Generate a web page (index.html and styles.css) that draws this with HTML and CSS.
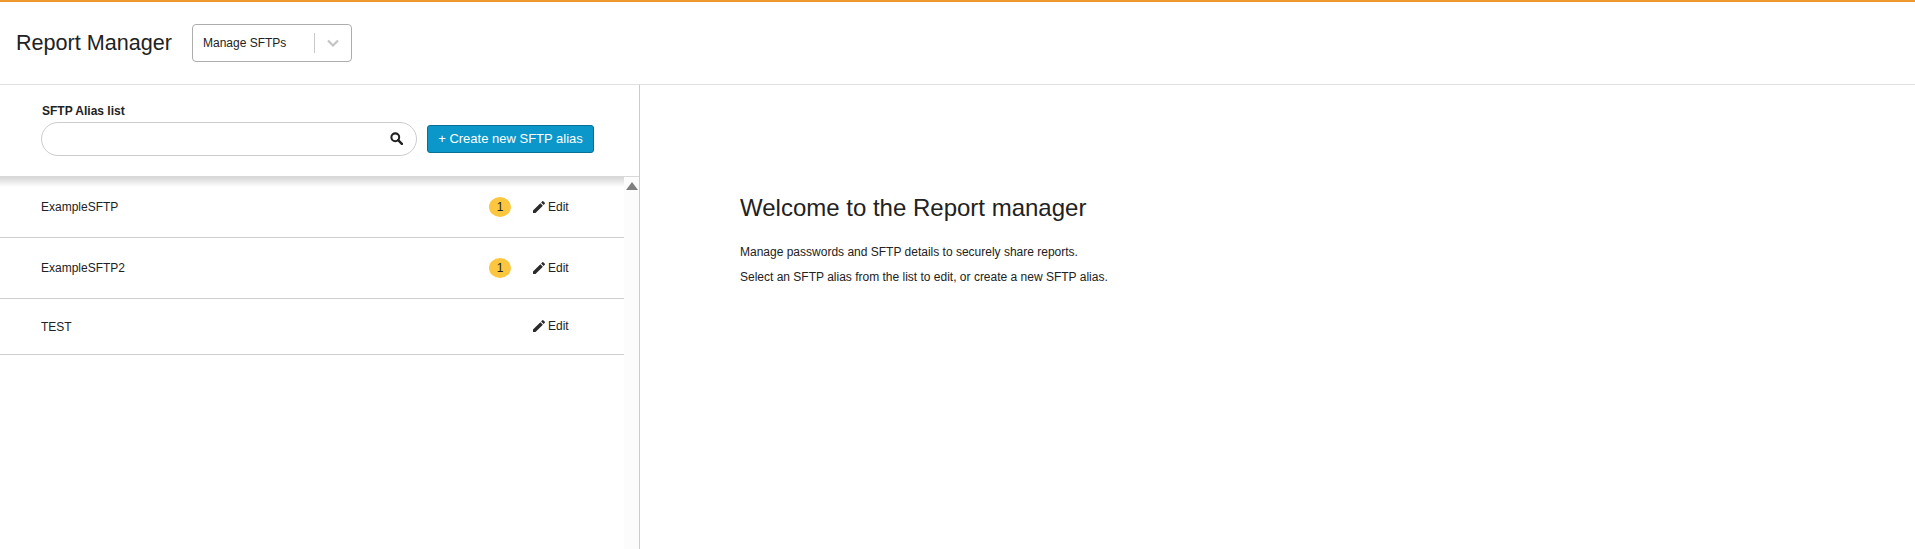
FILE: index.html
```html
<!DOCTYPE html>
<html lang="en">
<head>
<meta charset="utf-8">
<title>Report Manager</title>
<link rel="stylesheet" href="styles.css">
</head>
<body>
<div class="app">
  <header class="topbar">
    <h1 class="app-title">Report Manager</h1>
    <div class="select">
      <span class="select-value">Manage SFTPs</span>
      <span class="select-sep"></span>
      <svg class="select-chevron" viewBox="0 0 12 8" width="12" height="8"><path d="M1 1.5l5 5 5-5" fill="none" stroke="#c4c4c4" stroke-width="2.2"/></svg>
    </div>
  </header>
  <main class="body">
    <aside class="side">
      <section class="search-panel">
        <div class="search-col">
          <label class="search-label">SFTP Alias list</label>
          <div class="search-box">
            <svg class="search-icon" viewBox="0 0 14 14" width="13" height="13"><circle cx="5.7" cy="5.7" r="4.2" fill="none" stroke="#222" stroke-width="2.2"/><path d="M8.8 8.8l4 4" stroke="#222" stroke-width="2.6" stroke-linecap="round"/></svg>
          </div>
        </div>
        <button class="create-btn">+ Create new SFTP alias</button>
      </section>
      <div class="list-wrap">
        <ul class="list">
          <li class="row row-a"><span class="row-name">ExampleSFTP</span><span class="badge">1</span><span class="edit"><svg viewBox="0 0 24 24" width="16" height="16"><path d="M3 17.25V21h3.75L17.81 9.94l-3.75-3.75L3 17.25zM20.71 7.04a1 1 0 0 0 0-1.41l-2.34-2.34a1 1 0 0 0-1.41 0l-1.83 1.83 3.75 3.75 1.83-1.83z" fill="#2b2b2b"/></svg>Edit</span></li>
          <li class="row row-a"><span class="row-name">ExampleSFTP2</span><span class="badge">1</span><span class="edit"><svg viewBox="0 0 24 24" width="16" height="16"><path d="M3 17.25V21h3.75L17.81 9.94l-3.75-3.75L3 17.25zM20.71 7.04a1 1 0 0 0 0-1.41l-2.34-2.34a1 1 0 0 0-1.41 0l-1.83 1.83 3.75 3.75 1.83-1.83z" fill="#2b2b2b"/></svg>Edit</span></li>
          <li class="row row-b"><span class="row-name">TEST</span><span class="edit"><svg viewBox="0 0 24 24" width="16" height="16"><path d="M3 17.25V21h3.75L17.81 9.94l-3.75-3.75L3 17.25zM20.71 7.04a1 1 0 0 0 0-1.41l-2.34-2.34a1 1 0 0 0-1.41 0l-1.83 1.83 3.75 3.75 1.83-1.83z" fill="#2b2b2b"/></svg>Edit</span></li>
        </ul>
        <div class="scrollbar"><span class="scroll-up"></span></div>
      </div>
    </aside>
    <section class="content">
      <h2 class="welcome">Welcome to the Report manager</h2>
      <p class="para">Manage passwords and SFTP details to securely share reports.</p>
      <p class="para">Select an SFTP alias from the list to edit, or create a new SFTP alias.</p>
    </section>
  </main>
</div>
</body>
</html>
```

FILE: styles.css
```css
* { box-sizing: border-box; }
html, body { margin: 0; height: 100%; overflow: hidden; background: #fff; }
body { font-family: "Liberation Sans", Arial, sans-serif; color: #222; font-size: 12px; }
.app { display: flex; flex-direction: column; height: 549px; border-top: 2px solid #f0962e; }
.topbar { height: 83px; flex: none; display: flex; align-items: center; gap: 19px; padding-left: 16px; border-bottom: 1px solid #e0e0e0; }
.app-title { margin: 0; font-size: 21.6px; font-weight: 400; color: #222; width: 157px; white-space: nowrap; }
.select { width: 160px; height: 38px; border: 1px solid #adadad; border-radius: 4px; display: flex; align-items: center; padding: 0 11px 0 10px; }
.select-value { width: 111px; font-size: 12px; }
.select-sep { width: 1px; height: 20px; background: #c9c9c9; }
.select-chevron { margin-left: 12px; }
.body { flex: 1; display: flex; min-height: 0; }
.side { width: 640px; flex: none; border-right: 1px solid #c8ccd0; display: flex; flex-direction: column; }
.search-panel { height: 92px; flex: none; display: flex; align-items: flex-end; padding: 0 0 20px 41px; background: #fff; border-bottom: 1px solid #d8d8d8; }
.search-col { width: 376px; }
.search-label { display: block; font-size: 12px; font-weight: 700; margin: 0 0 4px 1px; line-height: 14px; }
.search-box { height: 34px; border: 1px solid #ccc; border-radius: 17px; display: flex; align-items: center; justify-content: flex-end; padding: 0 13px 2px 0; }
.create-btn { width: 167px; height: 28px; margin: 0 0 3px 10px; background: #0b97c9; color: #fff; border: 1px solid #0a6f92; border-radius: 3px; font: 400 13px "Liberation Sans", Arial, sans-serif; padding: 0 0 2px; }
.list-wrap { flex: 1; display: flex; min-height: 0; }
.list { flex: 1; list-style: none; margin: 0; padding: 0; background: linear-gradient(rgba(0,0,0,.16), rgba(0,0,0,0)) no-repeat top / 100% 10px; }
.row { display: flex; align-items: center; padding-left: 41px; border-bottom: 1px solid #cfcfcf; }
.row-a { height: 61px; }
.row-b { height: 56px; }
.row-b .edit { margin-bottom: 2px; }
.row-name { flex: 1; font-size: 12px; }
.badge { width: 22px; height: 20px; border-radius: 50%; background: #fdc63f; font-size: 12px; display: flex; align-items: center; justify-content: center; margin-right: 19px; }
.edit { width: 55px; margin-right: 39px; padding-left: 1px; display: flex; align-items: center; gap: 1px; font-size: 12px; }
.scrollbar { width: 15px; flex: none; background: #fcfcfc; display: flex; justify-content: center; padding-top: 5px; }
.scroll-up { width: 0; height: 0; border-left: 6px solid transparent; border-right: 6px solid transparent; border-bottom: 8px solid #808080; }
.content { flex: 1; padding: 109px 0 0 100px; }
.welcome { margin: 0 0 23px; font-size: 24px; font-weight: 400; line-height: 28px; }
.para { margin: 0 0 11px; font-size: 12px; line-height: 14px; }
```
